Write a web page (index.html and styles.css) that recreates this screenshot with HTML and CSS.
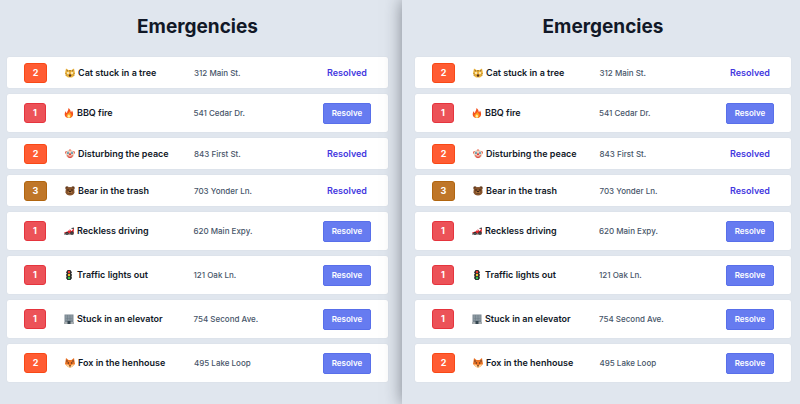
FILE: index.html
```
<!DOCTYPE html>
<html lang="en">
<head>
    <meta charset="UTF-8">
    <meta name="viewport" content="width=device-width, initial-scale=1.0">
    <title>Emergencies</title>
    <link rel="stylesheet" href="styles.css">
</head>
<body>
    <svg class="sprite" aria-hidden="true">
        <symbol id="cat" viewBox="0 0 20 20">
            <path d="M2 1l5 3h6l5-3 2 9-2 6-4 3H6l-4-3-2-6z" fill="#efb840"/>
            <path d="M3 3l3 2-2 3zM17 3l-3 2 2 3z" fill="#8a6434"/>
            <path d="M8 4h1v3H8zM11 4h1v3h-1z" fill="#76501d"/>
            <path d="M0 11l4 1M1 15l4-1M20 11l-4 1M19 15l-4-1" stroke="#9a7026"/>
            <ellipse cx="6" cy="10" rx="2" ry="2" fill="#fff6d6"/>
            <ellipse cx="14" cy="10" rx="2" ry="2" fill="#fff6d6"/>
            <ellipse cx="10" cy="15" rx="2.500" ry="2.500" fill="#5d3420"/>
            <path d="M9 11h2l-1 1z" fill="#c76a55"/>
        </symbol>
        <symbol id="fire" viewBox="0 0 20 20">
            <path d="M9 0c5 4 4 7 5 9l2-4c4 6 3 15-6 15S-1 11 4 6c0 3 1 4 2 4C6 6 9 5 9 0z" fill="#f4511e"/>
            <path d="M11 7c1 4 5 5 4 9-1 3-3 4-5 4s-6-2-5-6c1-3 5-3 6-7z" fill="#ff9d1e"/>
            <path d="M10 12c0 2 3 3 2 6-1 2-5 2-5-1s3-3 3-5z" fill="#fff0a0"/>
        </symbol>
        <symbol id="clown" viewBox="0 0 20 20">
            <circle cx="3" cy="7" r="3" fill="#e8604c"/>
            <circle cx="17" cy="7" r="3" fill="#e8604c"/>
            <circle cx="10" cy="10" r="8.500" fill="#f3d3bd"/>
            <path d="M8 2q2-3 4 0l-2 2z" fill="#e8604c"/>
            <path d="M6 4l2 4-2 3-2-3zM14 4l2 4-2 3-2-3z" fill="#6bb9dc"/>
            <circle cx="6" cy="8" r="1" fill="#222"/>
            <circle cx="14" cy="8" r="1" fill="#222"/>
            <circle cx="10" cy="10.500" r="2" fill="#e02b2b"/>
            <path d="M4 12q6 4 12 0-1 6-6 6t-6-6z" fill="#d9423a"/>
            <path d="M6 14q4 2 8 0-1 2-4 2t-4-2z" fill="#fff"/>
        </symbol>
        <symbol id="bear" viewBox="0 0 20 20">
            <circle cx="4" cy="4" r="3.500" fill="#5f381c"/>
            <circle cx="16" cy="4" r="3.500" fill="#5f381c"/>
            <path d="M3 4q7-4 14 0 3 5 2 9-2 6-9 6t-9-6q-1-4 2-9z" fill="#85522a"/>
            <circle cx="6" cy="8" r="1.300" fill="#24150d"/>
            <circle cx="14" cy="8" r="1.300" fill="#24150d"/>
            <ellipse cx="10" cy="13" rx="4" ry="3.500" fill="#b0763f"/>
            <path d="M7 10h6l-3 3zM7 15h6v1H7z" fill="#24150d"/>
        </symbol>
        <symbol id="car" viewBox="0 0 20 20">
            <path d="M0 13l7-2 4-4 3 1 1 3 3-5h2l-1 9H2z" fill="#e3262e"/>
            <path d="M15 4l5-1v3h-5z" fill="#555"/>
            <path d="M9 9l3-2 1 2z" fill="#fff"/>
            <path d="M0 15h19v2H0z" fill="#444"/>
            <circle cx="6" cy="14.500" r="3" fill="#292929"/>
            <circle cx="16" cy="14" r="3.500" fill="#292929"/>
            <circle cx="6" cy="14.500" r="1" fill="#aaa"/>
            <circle cx="16" cy="14" r="1" fill="#aaa"/>
        </symbol>
        <symbol id="lights" viewBox="0 0 20 20">
            <path d="M4 3h12v3l-3 2h3v4l-3 1h3v4l-4 3H8l-4-3v-4h3l-3-1V8h3L4 6z" fill="#555"/>
            <rect x="6" y="0" width="8" height="20" rx="2" fill="#252b2d"/>
            <circle cx="10" cy="4" r="2.400" fill="#f23c32"/>
            <circle cx="10" cy="10" r="2.400" fill="#f8c52d"/>
            <circle cx="10" cy="16" r="2.400" fill="#36c451"/>
        </symbol>
        <symbol id="office" viewBox="0 0 20 20">
            <path d="M1 1h18v18H1z" fill="#7b8790"/>
            <path d="M3 3h14v10H3z" fill="#96a4ac"/>
            <path d="M3 6h14M3 9h14M3 12h14M7 2v11M12 2v11" stroke="#687780"/>
            <path d="M0 16h20v4H0z" fill="#a7adb0"/>
            <path d="M7 14h6v6H7z" fill="#354650"/>
        </symbol>
        <symbol id="fox" viewBox="0 0 20 20">
            <path d="M2 0l5 4h6l5-4 2 12-5 5-5 3-5-3-5-5z" fill="#ed7425"/>
            <path d="M3 3l3 3-3 3zM17 3l-3 3 3 3z" fill="#653b29"/>
            <path d="M1 13l5 0 4 4 4-4 5 0-4 4-5 3-5-3z" fill="#ffd699"/>
            <circle cx="6.500" cy="10" r="1.300" fill="#2b2020"/>
            <circle cx="13.500" cy="10" r="1.300" fill="#2b2020"/>
            <path d="M8 15h4l-2 3z" fill="#2b2020"/>
        </symbol>
    </svg>

    <main class="windows">
        <section class="pane pane-left">
            <h1>Emergencies</h1>
            <ul class="list"></ul>
        </section>
        <section class="pane pane-right">
            <h1>Emergencies</h1>
            <ul class="list"></ul>
        </section>
    </main>

    <script src="script.js"></script>
</body>
</html>
```

FILE: styles.css
```
* {
    box-sizing: border-box;
}
body {
    margin: 0;
    font-family: Inter, "Liberation Sans", sans-serif;
    background: #e0e6ee;
    color: #111827;
}
.sprite {
    display: none;
}
.windows {
    display: grid;
    grid-template-columns: 201fr 199fr;
    min-height: 100vh;
    overflow: hidden;
}
.pane {
    background: #e0e6ee;
}
.pane-left {
    padding: 15px 14px 22px 7px;
}
.pane-right {
    padding: 15px 9px 22px 13px;
    box-shadow: 0 0 16px rgba(30, 35, 45, 0.5);
}
h1 {
    margin: 0 0 18px;
    font-size: 19px;
    line-height: 24px;
    font-weight: 700;
    text-align: center;
}
.list {
    display: flex;
    flex-direction: column;
    gap: 6px;
    margin: 0;
    padding: 0;
    list-style: none;
}
.card {
    display: flex;
    align-items: center;
    min-height: 31px;
    padding: 5px 17px;
    background: #fff;
    border-radius: 2px;
    box-shadow: 0 0 1px rgba(15, 23, 42, 0.12);
}
.card.open {
    min-height: 38px;
}
.level {
    width: 23px;
    margin-right: 18px;
    border: 1px solid;
    border-radius: 3px;
    color: #fff;
    font-size: 9px;
    line-height: 18px;
    font-weight: 700;
    text-align: center;
}
.level-1 {
    width: 22px;
    background: #ec5258;
    border-color: #e5343d;
}
.level-2 {
    background: #ff5c33;
    border-color: #f84816;
}
.level-3 {
    background: #bf7628;
    border-color: #b1650f;
}
.name {
    display: flex;
    flex: 1;
    align-items: center;
    gap: 3px;
    font-size: 9px;
    line-height: 14px;
    font-weight: 600;
    white-space: nowrap;
}
.icon {
    width: 10px;
    height: 10px;
}
.place {
    flex: 1;
    color: #475569;
    font-size: 8px;
    line-height: 14px;
    font-weight: 500;
    white-space: nowrap;
}
.action {
    display: flex;
    justify-content: center;
    width: 48px;
}
.resolved {
    color: #4338e0;
    font-size: 9px;
    line-height: 14px;
    font-weight: 600;
}
.resolve {
    width: 100%;
    height: 21px;
    padding: 0;
    border: 1px solid #586fea;
    border-radius: 2px;
    background: #667bf0;
    color: #fff;
    font-family: inherit;
    font-size: 8px;
    font-weight: 600;
    cursor: pointer;
}
.resolve:hover {
    background: #4f63dd;
}
```

FILE: script.js
```
const emergencies = [
    { level: 2, icon: "cat", name: "Cat stuck in a tree", place: "312 Main St.", resolved: true },
    { level: 1, icon: "fire", name: "BBQ fire", place: "541 Cedar Dr.", resolved: false },
    { level: 2, icon: "clown", name: "Disturbing the peace", place: "843 First St.", resolved: true },
    { level: 3, icon: "bear", name: "Bear in the trash", place: "703 Yonder Ln.", resolved: true },
    { level: 1, icon: "car", name: "Reckless driving", place: "620 Main Expy.", resolved: false },
    { level: 1, icon: "lights", name: "Traffic lights out", place: "121 Oak Ln.", resolved: false },
    { level: 1, icon: "office", name: "Stuck in an elevator", place: "754 Second Ave.", resolved: false },
    { level: 2, icon: "fox", name: "Fox in the henhouse", place: "495 Lake Loop", resolved: false }
];

function render() {
    const rows = emergencies.map((e, i) => `
        <li class="card ${e.resolved ? "" : "open"}">
            <span class="level level-${e.level}">${e.level}</span>
            <span class="name"><svg class="icon" aria-hidden="true"><use href="#${e.icon}"/></svg>${e.name}</span>
            <span class="place">${e.place}</span>
            <span class="action">${e.resolved
                ? '<span class="resolved">Resolved</span>'
                : `<button class="resolve" type="button" data-index="${i}">Resolve</button>`}</span>
        </li>`).join("");

    document.querySelectorAll(".list").forEach(list => list.innerHTML = rows);
}

// both windows show the same list
document.addEventListener("click", event => {
    const button = event.target.closest(".resolve");
    if (button) {
        emergencies[button.dataset.index].resolved = true;
        render();
    }
});

render();
```
